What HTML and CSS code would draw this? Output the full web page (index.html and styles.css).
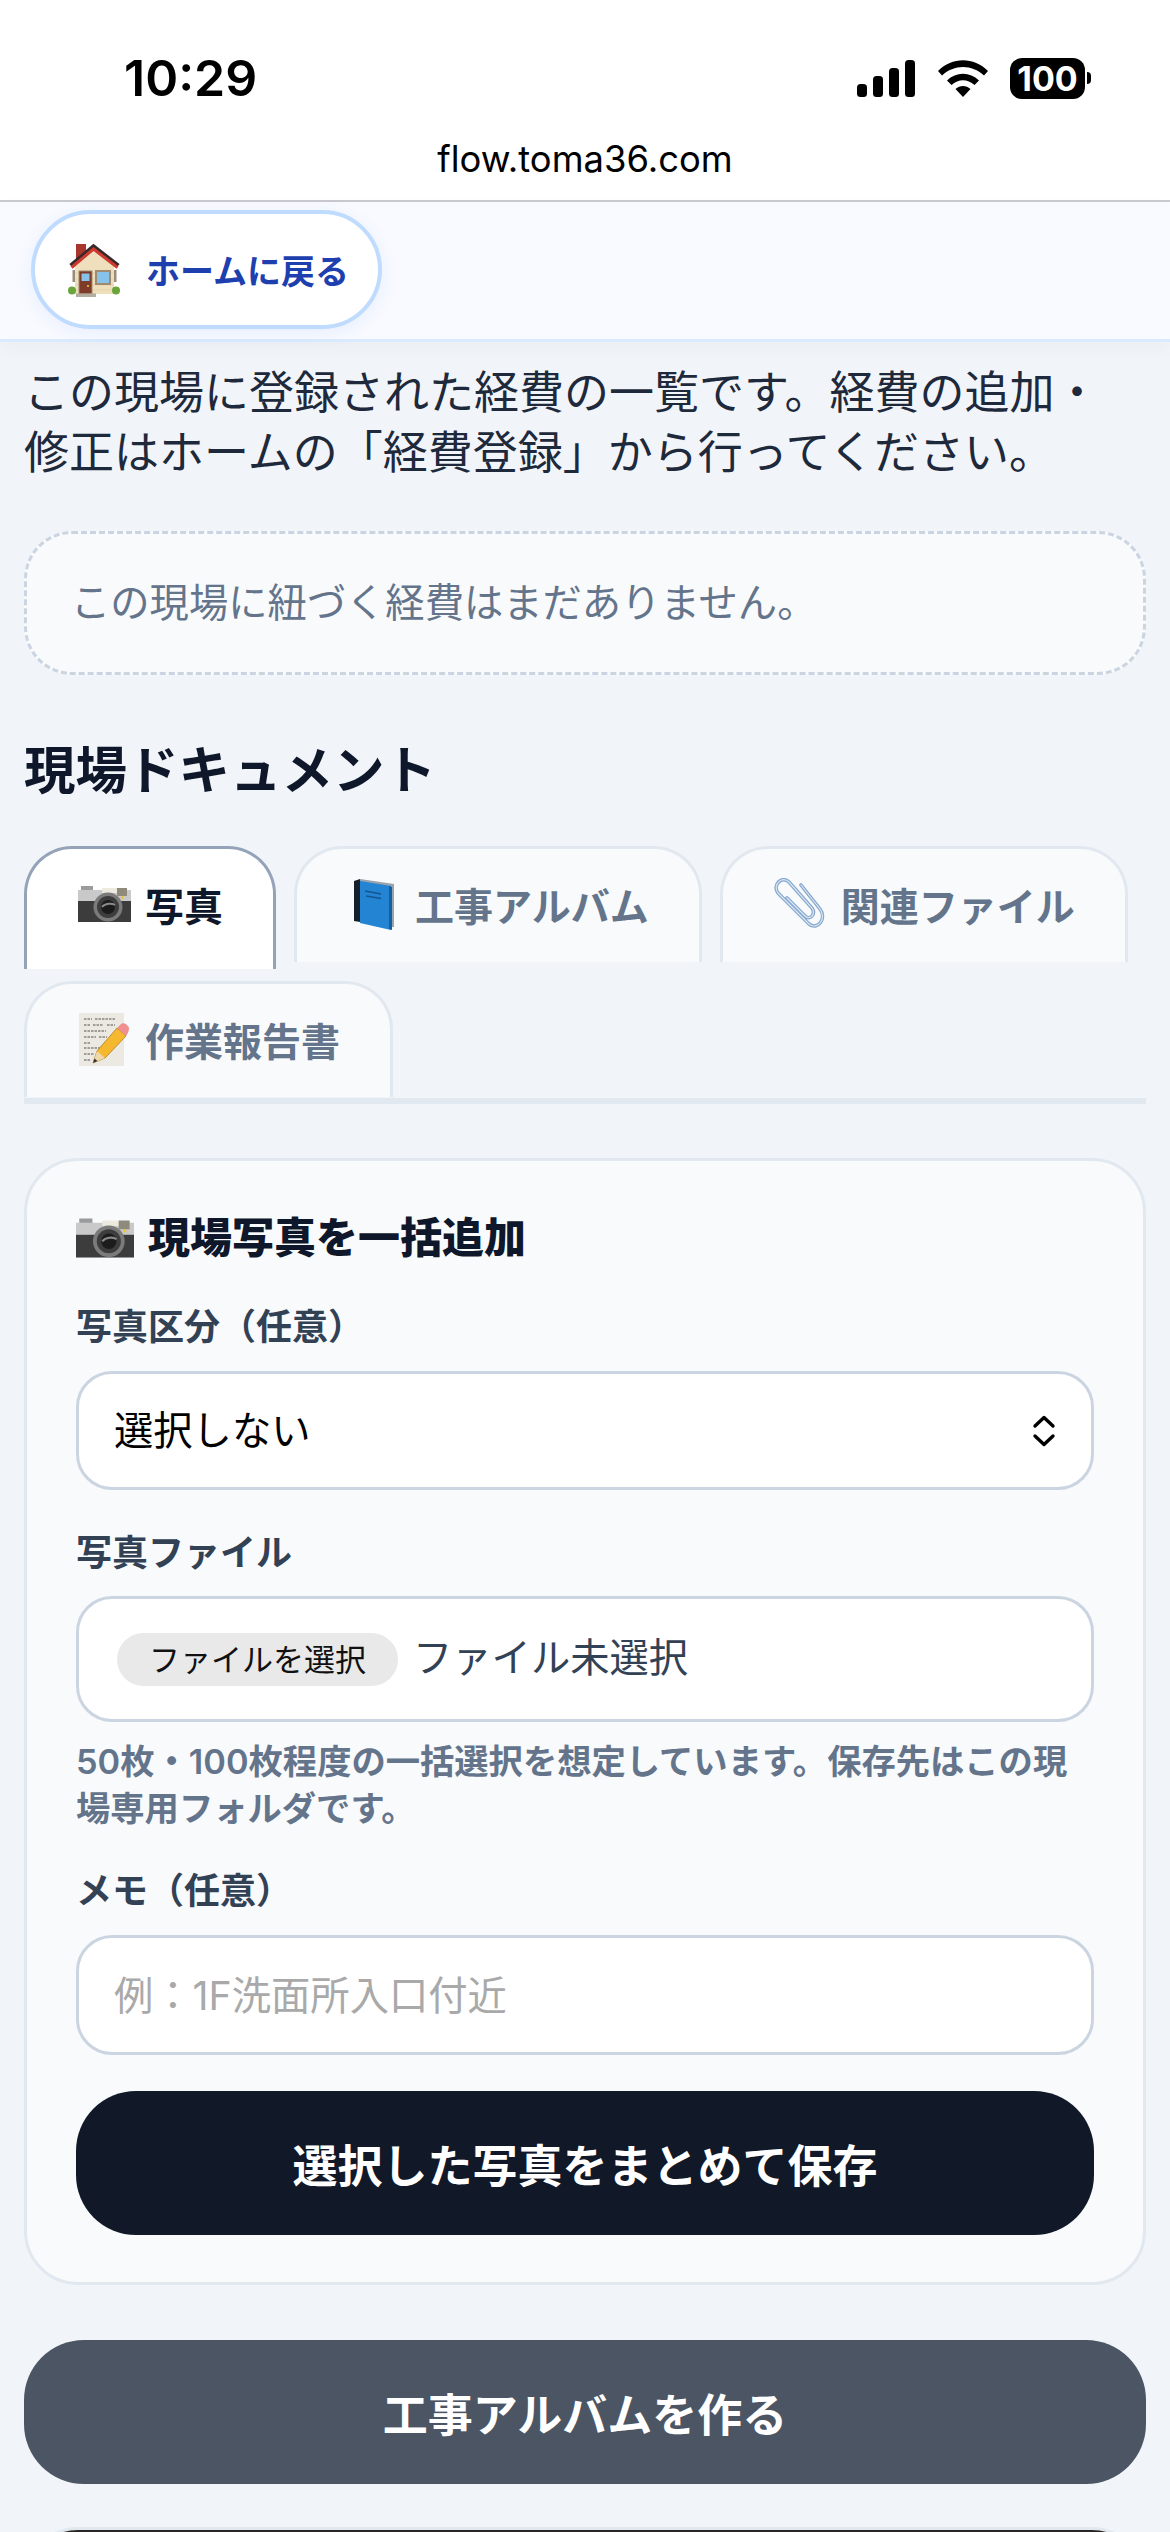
FILE: index.html
```html
<!DOCTYPE html>
<html lang="ja">
<head>
  <meta charset="UTF-8">
  <title>現場ドキュメント</title>
  <link rel="stylesheet" href="styles.css">
</head>
<body>
  <div class="page">
    <header class="browser-top">
      <div class="status-bar">
        <span class="time">10:29</span>
        <div class="status-icons">
          <svg class="icon-signal" viewBox="0 0 58 37" aria-hidden="true">
            <rect x="0" y="24" width="10" height="13" rx="3.5"/>
            <rect x="16" y="16" width="10" height="21" rx="3.5"/>
            <rect x="32" y="8" width="10" height="29" rx="3.5"/>
            <rect x="48" y="0" width="10" height="37" rx="3.5"/>
          </svg>
          <svg class="icon-wifi" viewBox="0 0 50 37" aria-hidden="true">
            <path d="M0 11 C14 -3.5 36 -3.5 50 11 L46 15.5 C34 4 16 4 4 15.5 Z"/>
            <path d="M9 20.5 C18 11.5 32 11.5 41 20.5 L36.5 25 C29.5 18.5 20.5 18.5 13.5 25 Z"/>
            <path d="M17.5 29 C22 25 28 25 32.5 29 L25 37 Z"/>
          </svg>
          <div class="battery">
            <span class="battery-body">100</span>
            <span class="battery-nub"></span>
          </div>
        </div>
      </div>
      <div class="url-bar">flow.toma36.com</div>
    </header>

    <nav class="home-nav">
      <a class="home-link" href="#">
        <svg class="emoji-house" viewBox="0 0 52 54" aria-hidden="true">
          <rect x="8" y="1" width="10" height="16" fill="#a8362c"/>
          <rect x="4.500" y="27" width="44" height="12" fill="#9a8c7a"/>
          <path d="M7 51 V22 L25.500 7 L46 22 V51 Z" fill="#f0dfbd"/>
          <path d="M7 30h39M7 36h39M7 42h39M7 47h39" stroke="#e3cfa8" stroke-width="0.800"/>
          <path d="M3 23 L25.500 4 L50 23" fill="none" stroke="#37292b" stroke-width="5"/>
          <path d="M3.500 24.500 L25.500 6 L49.500 24.500" fill="none" stroke="#cf3a2e" stroke-width="3"/>
          <rect x="11" y="28" width="13" height="23" fill="#7d3b28" stroke="#a08a70" stroke-width="1"/>
          <rect x="13.500" y="30.500" width="8" height="7.500" fill="#86c2ea"/>
          <circle cx="20" cy="43" r="1.100" fill="#f2c33a"/>
          <rect x="28" y="28" width="14" height="13" fill="#86c2ea" stroke="#a08a70" stroke-width="2"/>
          <circle cx="4" cy="47.500" r="4" fill="#6aa53c"/>
          <circle cx="48" cy="47.500" r="4" fill="#6aa53c"/>
          <rect x="8" y="50.500" width="20" height="3.500" fill="#b5aca0"/>
        </svg>
        <span>ホームに戻る</span>
      </a>
    </nav>

    <main class="content">
      <p class="lead">この現場に登録された経費の一覧です。経費の追加・<br>修正はホームの「経費登録」から行ってください。</p>

      <div class="empty-box">この現場に紐づく経費はまだありません。</div>

      <h2 class="section-title">現場ドキュメント</h2>

      <div class="tabs">
        <button class="tab tab-active">
          <span class="tab-emoji">
            <svg class="emoji-camera" viewBox="0 0 53 36" aria-hidden="true"><use href="#camera"/></svg>
          </span>
          写真
        </button>
        <button class="tab">
          <span class="tab-emoji">
            <svg class="emoji-book" viewBox="0 0 40 51" aria-hidden="true">
              <path d="M0 2 L6 0 L6 43 L0 42 Z" fill="#16202c"/>
              <path d="M6 0 L40 5 L40 48 L38 48 L38 8 L6 3 Z" fill="#9aa3ab"/>
              <path d="M6 2 L37 7 L37 51 L6 44 Z" fill="#2384d4"/>
              <path d="M35 7 L38 8 L38 51 L35 50 Z" fill="#16609e"/>
              <path d="M11 12 L27 15 M12 17 L27 19.500" stroke="#14558f" stroke-width="1.500"/>
            </svg>
          </span>
          工事アルバム
        </button>
        <button class="tab">
          <span class="tab-emoji">
            <svg class="emoji-clip" viewBox="0 0 52 52" aria-hidden="true">
              <path d="M27 7 L46 31 C53 40 44 53 35 46 L4 15 C-2 7 8 -3 15 4 L38 30 C42 36 36 43 31 38 L13 20" fill="none" stroke="#86a8cf" stroke-width="3.600" stroke-linecap="round"/>
              <path d="M27 7 L46 31 C53 40 44 53 35 46 L4 15 C-2 7 8 -3 15 4 L38 30 C42 36 36 43 31 38 L13 20" fill="none" stroke="#dbe6f0" stroke-width="1.200" stroke-linecap="round"/>
            </svg>
          </span>
          関連ファイル
        </button>
        <button class="tab">
          <span class="tab-emoji">
            <svg class="emoji-memo" viewBox="0 0 50 53" aria-hidden="true">
              <rect x="0" y="0" width="45" height="53" fill="#ece9e3"/>
              <path d="M5 6h8M16 6h20M5 12h6M14 12h10M28 12h8M5 18h22M5 24h12M20 24h8M5 30h6M5 35h16M5 41h10M5 47h7" stroke="#55524e" stroke-width="1" stroke-dasharray="2.500 1"/>
              <path d="M14 50 L18 38 L38 15 L47 23 L26 45 Z" fill="#f5b82e" stroke="#b07c18" stroke-width="0.800"/>
              <path d="M14 50 L18 38 L26 45 Z" fill="#efd8ae"/>
              <path d="M14 50 L15.500 45.500 L18.500 48 Z" fill="#333"/>
              <path d="M38 15 L42 11 C45 9 49 12 50 15 C50 18 49 20 47 23 Z" fill="#ef8f8f"/>
            </svg>
          </span>
          作業報告書
        </button>
      </div>

      <section class="card">
        <h3 class="card-title">
          <svg class="emoji-camera-title" viewBox="0 0 53 36" aria-hidden="true"><use href="#camera"/></svg>
          現場写真を一括追加
        </h3>

        <label class="field-label">写真区分（任意）</label>
        <div class="select-wrap">
          <select class="field select-field">
            <option>選択しない</option>
          </select>
          <svg class="select-arrows" viewBox="0 0 24 32" aria-hidden="true">
            <path d="M3 11 L12 2.500 L21 11 M3 21 L12 29.500 L21 21" fill="none" stroke="#000" stroke-width="3.400" stroke-linecap="round" stroke-linejoin="round"/>
          </svg>
        </div>

        <label class="field-label label-gap">写真ファイル</label>
        <div class="field file-field">
          <span class="file-button">ファイルを選択</span>
          <span class="file-name">ファイル未選択</span>
        </div>
        <p class="hint">50枚・100枚程度の一括選択を想定しています。保存先はこの現場専用フォルダです。</p>

        <label class="field-label memo-label">メモ（任意）</label>
        <input class="field text-field" type="text" placeholder="例：1F洗面所入口付近">

        <button class="btn btn-save">選択した写真をまとめて保存</button>
      </section>

      <button class="btn btn-album">工事アルバムを作る</button>
      <div class="photo-card"></div>
    </main>
  </div>

  <svg class="svg-defs" aria-hidden="true">
    <symbol id="camera" viewBox="0 0 53 36">
      <rect x="3" y="0" width="12" height="6" fill="#9b9b9b"/>
      <path d="M0 4 H53 V15 H0 Z" fill="#c9c9c9"/>
      <rect x="24" y="2" width="15" height="5" fill="#ece9df"/>
      <rect x="39" y="2" width="10" height="8" fill="#8f8a7c"/>
      <rect x="0" y="15" width="53" height="21" fill="#3c3c3c"/>
      <circle cx="30" cy="21" r="14.500" fill="#7b7b7b"/>
      <circle cx="30" cy="21" r="11" fill="#3d3d3d"/>
      <circle cx="30" cy="21" r="7" fill="#1c1c1c"/>
      <path d="M24 21 C27 17 34 17 37 19" stroke="#8a8a8a" stroke-width="2" fill="none"/>
      <circle cx="44.500" cy="11.500" r="1.500" fill="#f2c230"/>
    </symbol>
  </svg>
</body>
</html>
```

FILE: styles.css
```css
* {
  box-sizing: border-box;
}

html,
body {
  margin: 0;
  padding: 0;
}

body {
  font-family: "Inter", "Noto Sans CJK JP", sans-serif;
  background-color: #f1f5f9;
  color: #1e293b;
}

.page {
  height: 100vh;
  overflow: hidden;
}

.svg-defs {
  display: none;
}

/* browser chrome */
.browser-top {
  height: 202px;
  background-color: #fff;
  border-bottom: 2px solid #c9c9d0;
}

.status-bar {
  display: flex;
  justify-content: space-between;
  align-items: center;
  height: 136px;
  padding: 20px 79px 0 124px;
}

.time {
  font-size: 50px;
  font-weight: 600;
  color: #000;
}

.status-icons {
  display: flex;
  align-items: center;
}

.icon-signal {
  width: 58px;
  height: 37px;
  margin-right: 23px;
}

.icon-wifi {
  width: 50px;
  height: 37px;
  margin-right: 22px;
}

.battery {
  display: flex;
  align-items: center;
}

.battery-body {
  width: 75px;
  height: 41px;
  border-radius: 12px;
  background-color: #000;
  color: #fff;
  font-size: 34px;
  font-weight: 700;
  line-height: 41px;
  text-align: center;
}

.battery-nub {
  width: 4px;
  height: 12px;
  margin-left: 2px;
  background-color: #000;
  border-radius: 0 6px 6px 0;
}

.url-bar {
  text-align: center;
  font-size: 36.4px;
  line-height: 46px;
  color: #000;
}

/* home nav */
.home-nav {
  height: 140px;
  padding: 8px 31px 0;
  background-color: #f8faff;
  border-bottom: 3px solid #dbeafe;
  box-shadow: 0 6px 18px rgba(15, 23, 42, 0.03);
}

.home-link {
  display: inline-flex;
  align-items: center;
  gap: 26px;
  width: 351px;
  height: 119px;
  padding-left: 33px;
  background-color: #fff;
  border: 4px solid #bfdbfe;
  border-radius: 60px;
  box-shadow: 0 4px 18px rgba(37, 99, 235, 0.08);
  color: #1e40af;
  font-size: 34px;
  font-weight: 700;
  text-decoration: none;
}

.emoji-house {
  width: 52px;
  height: 54px;
}

/* content */
.content {
  padding: 21px 24px 0;
}

.lead {
  margin: 0 0 48px;
  font-size: 45px;
  line-height: 60px;
}

.empty-box {
  height: 144px;
  padding-left: 44px;
  border: 3px dashed #cbd5e1;
  border-radius: 48px;
  background-color: #f8fafc;
  color: #64748b;
  font-size: 39.3px;
  line-height: 138px;
}

.section-title {
  margin: 62px 0 43px;
  color: #0f172a;
  font-size: 51.5px;
  font-weight: 700;
  line-height: 66px;
}

/* tabs */
.tabs {
  display: flex;
  flex-wrap: wrap;
  gap: 19px 18px;
  padding-bottom: 1px;
  border-bottom: 6px solid #e2e8f0;
}

.tab {
  display: flex;
  align-items: center;
  height: 116px;
  padding: 0 50px 3px 50px;
  background-color: #f8fafc;
  border: 3px solid #e2e8f0;
  border-bottom: none;
  border-radius: 48px 48px 0 0;
  color: #64748b;
  font-family: inherit;
  font-size: 39px;
  font-weight: 700;
  white-space: nowrap;
}

.tab-active {
  height: auto;
  margin-bottom: -7px;
  padding-bottom: 10px;
  background-color: #fff;
  border-color: #94a3b8;
  color: #0f172a;
}

.tab-emoji {
  display: flex;
  justify-content: center;
  width: 54px;
  margin-right: 14px;
}

.emoji-camera {
  width: 53px;
  height: 36px;
}

.emoji-book {
  width: 40px;
  height: 51px;
}

.emoji-clip {
  width: 52px;
  height: 52px;
}

.emoji-memo {
  width: 50px;
  height: 53px;
}

/* card */
.card {
  margin-top: 54px;
  padding: 50px 49px 47px;
  background-color: #f8fafc;
  border: 3px solid #e2e8f0;
  border-radius: 54px;
}

.card-title {
  display: flex;
  align-items: center;
  gap: 14px;
  margin: 0 0 38px;
  color: #0f172a;
  font-size: 42px;
  font-weight: 800;
  line-height: 54px;
}

.emoji-camera-title {
  width: 58px;
  height: 40px;
}

.field-label {
  display: block;
  margin-bottom: 20px;
  color: #334155;
  font-size: 36px;
  font-weight: 700;
  line-height: 48px;
}

.label-gap {
  margin-top: 39px;
  margin-bottom: 19px;
}

.memo-label {
  margin-top: 35px;
}

.field {
  display: block;
  width: 100%;
  background-color: #fff;
  border: 3px solid #cbd5e1;
  border-radius: 36px;
  font-family: inherit;
  font-size: 39.3px;
  color: #000;
}

.select-wrap {
  position: relative;
}

.select-field {
  height: 119px;
  padding: 0 35px;
  appearance: none;
}

.select-arrows {
  position: absolute;
  right: 38px;
  top: 44px;
  width: 24px;
  height: 32px;
}

.file-field {
  display: flex;
  align-items: center;
  height: 126px;
  padding-left: 38px;
}

.file-button {
  width: 281px;
  height: 53px;
  margin-right: 15px;
  background-color: #e9e9e9;
  border-radius: 27px;
  color: #111;
  font-size: 31px;
  line-height: 53px;
  text-align: center;
}

.file-name {
  margin-top: -9px;
  color: #334155;
}

.hint {
  margin: 16px 0 0;
  color: #64748b;
  font-size: 34.3px;
  font-weight: 600;
  line-height: 47px;
}

.text-field {
  height: 120px;
  padding: 0 35px;
}

.text-field::placeholder {
  color: #a9a9a9;
  opacity: 1;
}

/* buttons */
.btn {
  display: block;
  width: 100%;
  height: 144px;
  border: none;
  border-radius: 60px;
  color: #fff;
  font-family: inherit;
  font-size: 45px;
  font-weight: 700;
}

.btn-save {
  margin-top: 36px;
  background-color: #111827;
}

.btn-album {
  margin-top: 55px;
  background-color: #4b5563;
}

.photo-card {
  height: 120px;
  margin-top: 43px;
  background-color: #2a2522;
  border: 3px solid #e2e8f0;
  border-radius: 54px;
}
```
